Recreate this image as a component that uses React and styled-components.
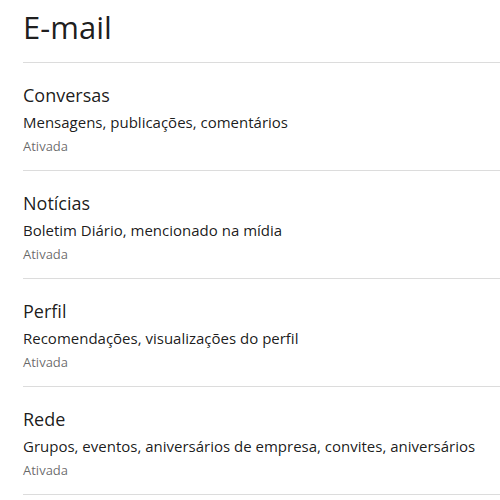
import styled, { createGlobalStyle } from "styled-components";

const GlobalStyle = createGlobalStyle`
  body {
    margin: 0;
    background: #fff;
    font-family: "Open Sans", "Noto Sans", sans-serif;
    color: rgba(0, 0, 0, 0.9);
  }
`;

const Page = styled.div`
  padding-left: 23px;
`;

const Header = styled.h1`
  margin: 0;
  padding: 7px 0 15px;
  font-size: 31px;
  line-height: 40px;
  font-weight: 400;
  border-bottom: 1px solid #dcdcdc;
`;

const Section = styled.div`
  padding: 20px 0 15px;
  border-bottom: 1px solid #dcdcdc;
`;

const Title = styled.h3`
  margin: 0;
  font-size: 18px;
  line-height: 24px;
  font-weight: 400;
`;

const Desc = styled.p`
  margin: 0;
  font-size: 15px;
  line-height: 30px;
`;

const Status = styled.span`
  display: block;
  font-size: 13px;
  line-height: 18px;
  color: rgba(0, 0, 0, 0.6);
`;

const sections = [
  { title: "Conversas", desc: "Mensagens, publicações, comentários" },
  { title: "Notícias", desc: "Boletim Diário, mencionado na mídia" },
  { title: "Perfil", desc: "Recomendações, visualizações do perfil" },
  { title: "Rede", desc: "Grupos, eventos, aniversários de empresa, convites, aniversários" },
];

export default function App() {
  return (
    <Page>
      <GlobalStyle />
      <Header>E-mail</Header>
      {sections.map((s) => (
        <Section key={s.title}>
          <Title>{s.title}</Title>
          <Desc>{s.desc}</Desc>
          <Status>Ativada</Status>
        </Section>
      ))}
    </Page>
  );
}
